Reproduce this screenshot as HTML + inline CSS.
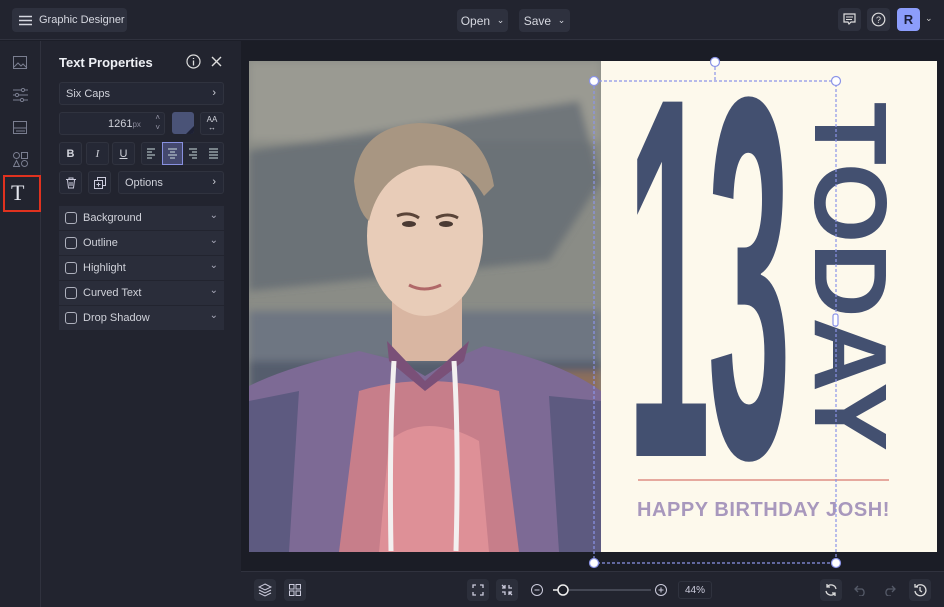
<!DOCTYPE html>
<html><head><meta charset="utf-8">
<style>
*{box-sizing:border-box;margin:0;padding:0}
body{width:944px;height:607px;overflow:hidden;background:#1c1e28;font-family:"Liberation Sans",sans-serif;color:#d8dae3;position:relative}
.top{position:absolute;left:0;top:0;width:944px;height:40px;background:#22242f;border-bottom:1px solid #30323e}
.btn{position:absolute;background:#2e313e;border-radius:4px;font-size:12px;color:#d6d8e0;display:flex;align-items:center;justify-content:center;white-space:nowrap}
.rail{position:absolute;left:0;top:41px;width:41px;height:566px;background:#22242f;border-right:1px solid #30323e}
.panel{position:absolute;left:41px;top:41px;width:200px;height:566px;background:#22242f}
.fld{position:absolute;background:#252835;border:1px solid #30333f;border-radius:3px;font-size:11px;color:#d0d2da}
.row{position:absolute;left:59px;width:165px;height:24px;background:#2a2d3a;font-size:11px;color:#d0d2da}
.row .cb{position:absolute;left:6px;top:6px;width:12px;height:12px;border:1px solid #aeb1bd;border-radius:3px}
.row span{position:absolute;left:24px;top:6px}
.row i{position:absolute;right:6px;top:4px;font-style:normal;font-size:10px;color:#aab}
.canvas{position:absolute;left:241px;top:41px;width:703px;height:530px;background:#1b1d26}
.bottom{position:absolute;left:241px;top:571px;width:703px;height:36px;background:#22242f;border-top:1px solid #30323e}
.ib{position:absolute;width:22px;height:22px;background:#2c2f3b;border-radius:4px}
</style></head><body>
<div class="top">
  <div class="btn" style="left:12px;top:8px;width:115px;height:24px;justify-content:flex-start;padding-left:7px;font-size:11px">
    <svg width="13" height="11"><path d="M0 1.5h13M0 5.5h13M0 9.5h13" stroke="#d6d8e0" stroke-width="1.4"/></svg>
    <span style="margin-left:7px">Graphic Designer</span></div>
  <div class="btn" style="left:457px;top:9px;width:51px;height:23px">Open&nbsp;&nbsp;<span style="font-size:9px">⌄</span></div>
  <div class="btn" style="left:519px;top:9px;width:51px;height:23px">Save&nbsp;&nbsp;<span style="font-size:9px">⌄</span></div>
  <div class="btn" style="left:838px;top:8px;width:23px;height:23px"><svg width="13" height="13"><path d="M1 1h11v8H8l-2 2-1-2H1z" fill="none" stroke="#ddd" stroke-width="1.2"/><path d="M3 4h7M3 6.5h6" stroke="#ddd"/></svg></div>
  <div class="btn" style="left:867px;top:8px;width:23px;height:23px"><svg width="15" height="15"><circle cx="7.5" cy="7.5" r="6.3" fill="none" stroke="#ddd" stroke-width="1.2"/><text x="7.5" y="11" font-size="9" text-anchor="middle" fill="#ddd" font-family="Liberation Sans">?</text></svg></div>
  <div class="btn" style="left:897px;top:8px;width:23px;height:23px;background:#8c9dfb;color:#1c1f3a;font-weight:bold;font-size:13px">R</div>
  <div style="position:absolute;left:925px;top:13px;font-size:9px;color:#ccc">⌄</div>
</div>
<div class="rail">
  <svg style="position:absolute;left:13px;top:15px" width="15" height="14"><rect x=".5" y=".5" width="13" height="12" fill="none" stroke="#7a7e90"/><path d="M1 11l4-4 3 3 2-2 4 4" fill="none" stroke="#7a7e90"/></svg>
  <svg style="position:absolute;left:13px;top:47px" width="15" height="14"><path d="M0 2h15M0 7h15M0 12h15" stroke="#7a7e90"/><circle cx="10" cy="2" r="1.6" fill="#22242f" stroke="#7a7e90"/><circle cx="4" cy="7" r="1.6" fill="#22242f" stroke="#7a7e90"/><circle cx="9" cy="12" r="1.6" fill="#22242f" stroke="#7a7e90"/></svg>
  <svg style="position:absolute;left:13px;top:80px" width="15" height="14"><rect x=".5" y=".5" width="13" height="12" fill="none" stroke="#7a7e90"/><path d="M1 7h13M3 10h9" stroke="#7a7e90"/></svg>
  <svg style="position:absolute;left:13px;top:111px" width="15" height="15"><circle cx="3.5" cy="3.5" r="3" fill="none" stroke="#7a7e90"/><rect x="8.5" y=".5" width="6" height="6" fill="none" stroke="#7a7e90"/><path d="M3.5 8.5l3 6h-6z" fill="none" stroke="#7a7e90"/><circle cx="11.5" cy="11.5" r="3" fill="none" stroke="#7a7e90"/></svg>
  <div style="position:absolute;left:3px;top:134px;width:38px;height:37px;border:2px solid #e0321f"></div>
  <div style="position:absolute;left:11px;top:139px;font-family:'Liberation Serif',serif;font-size:22px;color:#e4e6ee">T</div>
</div>
<div class="panel">
  <div style="position:absolute;left:18px;top:14px;font-size:13px;font-weight:bold;color:#eef0f5">Text Properties</div>
  <svg style="position:absolute;left:145px;top:13px" width="15" height="15"><circle cx="7.5" cy="7.5" r="6.5" fill="none" stroke="#ddd" stroke-width="1.2"/><path d="M7.5 6.5v5M7.5 4v1" stroke="#ddd" stroke-width="1.3"/></svg>
  <svg style="position:absolute;left:170px;top:15px" width="11" height="11"><path d="M1 1l9 9M10 1l-9 9" stroke="#ddd" stroke-width="1.4"/></svg>
</div>
<div class="fld" style="left:59px;top:82px;width:165px;height:23px"><span style="position:absolute;left:6px;top:5px">Six Caps</span><span style="position:absolute;right:7px;top:4px">›</span></div>
<div class="fld" style="left:59px;top:112px;width:106px;height:23px"><span style="position:absolute;left:48px;top:5px">1261<small style="font-size:8px;color:#889">px</small></span><span style="position:absolute;right:4px;top:0;font-size:8px;color:#99a;line-height:10px">˄<br>˅</span></div>
<div style="position:absolute;left:172px;top:112px;width:22px;height:22px;background:#4a5377;border-radius:3px;overflow:hidden"><div style="position:absolute;right:0;bottom:0;width:0;height:0;border-left:8px solid transparent;border-bottom:8px solid #1d2033"></div></div>
<div class="fld" style="left:200px;top:112px;width:24px;height:23px;font-size:8px;text-align:center;padding-top:3px;line-height:8px">AA<br>↔</div>
<div class="fld" style="left:59px;top:142px;width:23px;height:23px;font-weight:bold;text-align:center;padding-top:5px">B</div>
<div class="fld" style="left:86px;top:142px;width:23px;height:23px;text-align:center;padding-top:5px;font-family:'Liberation Serif',serif;font-style:italic">I</div>
<div class="fld" style="left:112px;top:142px;width:23px;height:23px;text-align:center;padding-top:5px;text-decoration:underline">U</div>
<div class="fld" style="left:141px;top:142px;width:83px;height:23px"></div>
<svg style="position:absolute;left:141px;top:142px" width="83" height="23">
<rect x="21.5" y=".5" width="20" height="22" fill="#44486e" stroke="#8890e0"/>
<g stroke="#cdd" stroke-width="1"><path d="M6 7h8M6 10h5M6 13h8M6 16h5"/><path d="M27 7h9M29 10h5M27 13h9M29 16h5"/><path d="M48 7h8M51 10h5M48 13h8M51 16h5"/><path d="M68 7h9M68 10h9M68 13h9M68 16h9"/></g></svg>
<div class="fld" style="left:59px;top:171px;width:23px;height:23px"><svg style="margin:5px" width="12" height="12"><path d="M1 2.5h10M4 2.5V1h4v1.5M2.5 3l1 8h5l1-8M5 5v4M7 5v4" fill="none" stroke="#ccd"/></svg></div>
<div class="fld" style="left:88px;top:171px;width:23px;height:23px"><svg style="margin:5px" width="12" height="12"><rect x="3.5" y=".5" width="8" height="8" fill="none" stroke="#ccd"/><rect x=".5" y="3.5" width="8" height="8" fill="#252835" stroke="#ccd"/><path d="M4.5 5.5v4M2.5 7.5h4" stroke="#ccd"/></svg></div>
<div class="fld" style="left:118px;top:171px;width:106px;height:23px"><span style="position:absolute;left:6px;top:5px">Options</span><span style="position:absolute;right:7px;top:4px">›</span></div>
<div class="row" style="top:206px"><div class="cb"></div><span>Background</span><i>⌄</i></div>
<div class="row" style="top:231px"><div class="cb"></div><span>Outline</span><i>⌄</i></div>
<div class="row" style="top:256px"><div class="cb"></div><span>Highlight</span><i>⌄</i></div>
<div class="row" style="top:281px"><div class="cb"></div><span>Curved Text</span><i>⌄</i></div>
<div class="row" style="top:306px"><div class="cb"></div><span>Drop Shadow</span><i>⌄</i></div>

<div class="canvas"></div>
<svg style="position:absolute;left:249px;top:61px" width="352" height="491">
<defs><filter id="b"><feGaussianBlur stdDeviation="4"/></filter></defs>
<rect width="352" height="491" fill="#8a8c86"/>
<g filter="url(#b)">
<rect x="0" y="0" width="352" height="80" fill="#9a9a92"/>
<path d="M0 90L330 40L352 120L300 200L0 230z" fill="#5e6670" opacity=".7"/>
<rect x="0" y="250" width="352" height="80" fill="#6e7682"/>
<rect x="0" y="300" width="352" height="50" fill="#4e5868" opacity=".8"/>
<rect x="290" y="310" width="62" height="60" fill="#8c6e5c"/>
</g>
<path d="M0 325Q40 305 110 290L150 300L176 315L200 300L235 285Q310 300 352 330V491H0z" fill="#7d6a95"/>
<path d="M110 330Q176 310 250 330L270 491H90z" fill="#c77e8a"/>
<path d="M140 380Q176 350 230 380L240 491H130z" fill="#e4959a" opacity=".8"/>
<path d="M0 340L50 330L40 491H0z" fill="#5d5a80"/>
<path d="M300 335L352 340V491H310z" fill="#5d5a80"/>
<rect x="143" y="220" width="70" height="80" fill="#d9b6a2"/>
<path d="M138 280L176 320L220 280L215 300L176 330L140 300z" fill="#7a5078"/>
<ellipse cx="176" cy="175" rx="58" ry="80" fill="#e8ccb8"/>
<path d="M105 120Q110 65 170 62Q235 62 245 125L235 135Q215 100 170 105Q130 115 120 160Q108 150 105 120z" fill="#a89682"/>
<path d="M148 155q12-5 22 2M187 157q12-6 22 0" stroke="#5a4438" stroke-width="3" fill="none"/>
<ellipse cx="160" cy="163" rx="7" ry="3" fill="#4a3a33"/><ellipse cx="197" cy="163" rx="7" ry="3" fill="#4a3a33"/>
<path d="M160 224q15 8 32 0" stroke="#b06868" stroke-width="3" fill="none"/>
<path d="M145 300q-5 80 -3 190M205 300q5 80 2 190" stroke="#f3f0f0" stroke-width="5" fill="none"/>
</svg>
<div style="position:absolute;left:601px;top:61px;width:336px;height:491px;background:#fdf9ec;overflow:hidden">
  <div style="position:absolute;left:26px;top:20px;width:160px;height:380px;font-family:'Liberation Sans Narrow','Liberation Sans',sans-serif;font-weight:bold;font-size:515px;color:#435070;line-height:1;transform:scale(0.29,1);transform-origin:0 0;white-space:nowrap;letter-spacing:-8px;margin-top:-60px">13</div>
  <div style="position:absolute;left:301px;top:41px;transform:rotate(90deg);transform-origin:0 0;font-size:103px;font-weight:bold;color:#435070;line-height:1;white-space:nowrap;letter-spacing:0;font-family:'Liberation Sans',sans-serif">TODAY</div>
  <div style="position:absolute;left:37px;top:418px;width:251px;height:2px;background:#e6a99e"></div>
  <div style="position:absolute;left:36px;top:438px;font-size:20px;font-weight:bold;color:#a898bd;white-space:nowrap;letter-spacing:.55px">HAPPY BIRTHDAY JOSH!</div>
</div>
<svg style="position:absolute;left:0;top:0;pointer-events:none" width="944" height="607">
<g stroke="#8b94e8" stroke-width="1.2" stroke-dasharray="3 2" fill="none">
<path d="M594 81H836V563H594z"/><path d="M715 62V81"/></g>
<g fill="#fff" stroke="#8b94e8" stroke-width="1.2">
<circle cx="715" cy="62" r="4.5"/><circle cx="594" cy="81" r="4.5"/><circle cx="836" cy="81" r="4.5"/><circle cx="594" cy="563" r="4.5"/><circle cx="836" cy="563" r="4.5"/><rect x="833" y="314" width="5" height="12" rx="2"/></g>
</svg>
<div class="bottom">
  <div class="ib" style="left:13px;top:7px"><svg style="margin:4px" width="14" height="14"><path d="M7 1l6 3-6 3-6-3zM1 7l6 3 6-3M1 10l6 3 6-3" fill="none" stroke="#ccd"/></svg></div>
  <div class="ib" style="left:43px;top:7px"><svg style="margin:5px" width="12" height="12"><rect x=".5" y=".5" width="4.5" height="4.5" fill="none" stroke="#ccd"/><rect x="7" y=".5" width="4.5" height="4.5" fill="none" stroke="#ccd"/><rect x=".5" y="7" width="4.5" height="4.5" fill="none" stroke="#ccd"/><rect x="7" y="7" width="4.5" height="4.5" fill="none" stroke="#ccd"/></svg></div>
  <div class="ib" style="left:226px;top:7px"><svg style="margin:5px" width="12" height="12"><path d="M1 4V1h3M8 1h3v3M11 8v3H8M4 11H1V8" fill="none" stroke="#ccd" stroke-width="1.3"/></svg></div>
  <div class="ib" style="left:255px;top:7px"><svg style="margin:5px" width="12" height="12"><path d="M1 4h3V1M8 1v3h3M11 8H8v3M4 11V8H1M4 4L1 1M8 8l3 3" fill="none" stroke="#ccd" stroke-width="1.3"/></svg></div>
  <svg style="position:absolute;left:290px;top:11px" width="140" height="14"><circle cx="6" cy="7" r="5.5" fill="none" stroke="#ccd"/><path d="M3.5 7h5" stroke="#ccd"/><path d="M25 7h95" stroke="#666a78"/><circle cx="32" cy="7" r="5" fill="#1c1e28" stroke="#eee" stroke-width="1.5"/><path d="M22 7h5" stroke="#eee" stroke-width="1.5"/><circle cx="130" cy="7" r="5.5" fill="none" stroke="#ccd"/><path d="M127.5 7h5M130 4.5v5" stroke="#ccd"/></svg>
  <div style="position:absolute;left:437px;top:9px;width:34px;height:18px;border:1px solid #2f323e;border-radius:3px;font-size:10px;color:#ccd;text-align:center;padding-top:3px">44%</div>
  <div class="ib" style="left:579px;top:7px"><svg style="margin:4px" width="14" height="14"><path d="M12 6A5 5 0 0 0 3 4M2 8a5 5 0 0 0 9 2M3 1v3h3M11 13v-3H8" fill="none" stroke="#ddd" stroke-width="1.3"/></svg></div>
  <svg style="position:absolute;left:612px;top:12px" width="14" height="12"><path d="M3 5h6a4 4 0 0 1 0 7H6M5 2L2 5l3 3" fill="none" stroke="#555a68" stroke-width="1.3"/></svg>
  <svg style="position:absolute;left:642px;top:12px" width="14" height="12"><path d="M11 5H5a4 4 0 0 0 0 7h3M9 2l3 3-3 3" fill="none" stroke="#555a68" stroke-width="1.3"/></svg>
  <div class="ib" style="left:668px;top:7px"><svg style="margin:4px" width="14" height="14"><path d="M3 4a5.5 5.5 0 1 1-1 4M2 1v3h3M7 4v3.5l2 1.5" fill="none" stroke="#ddd" stroke-width="1.3"/></svg></div>
</div>
</body></html>
